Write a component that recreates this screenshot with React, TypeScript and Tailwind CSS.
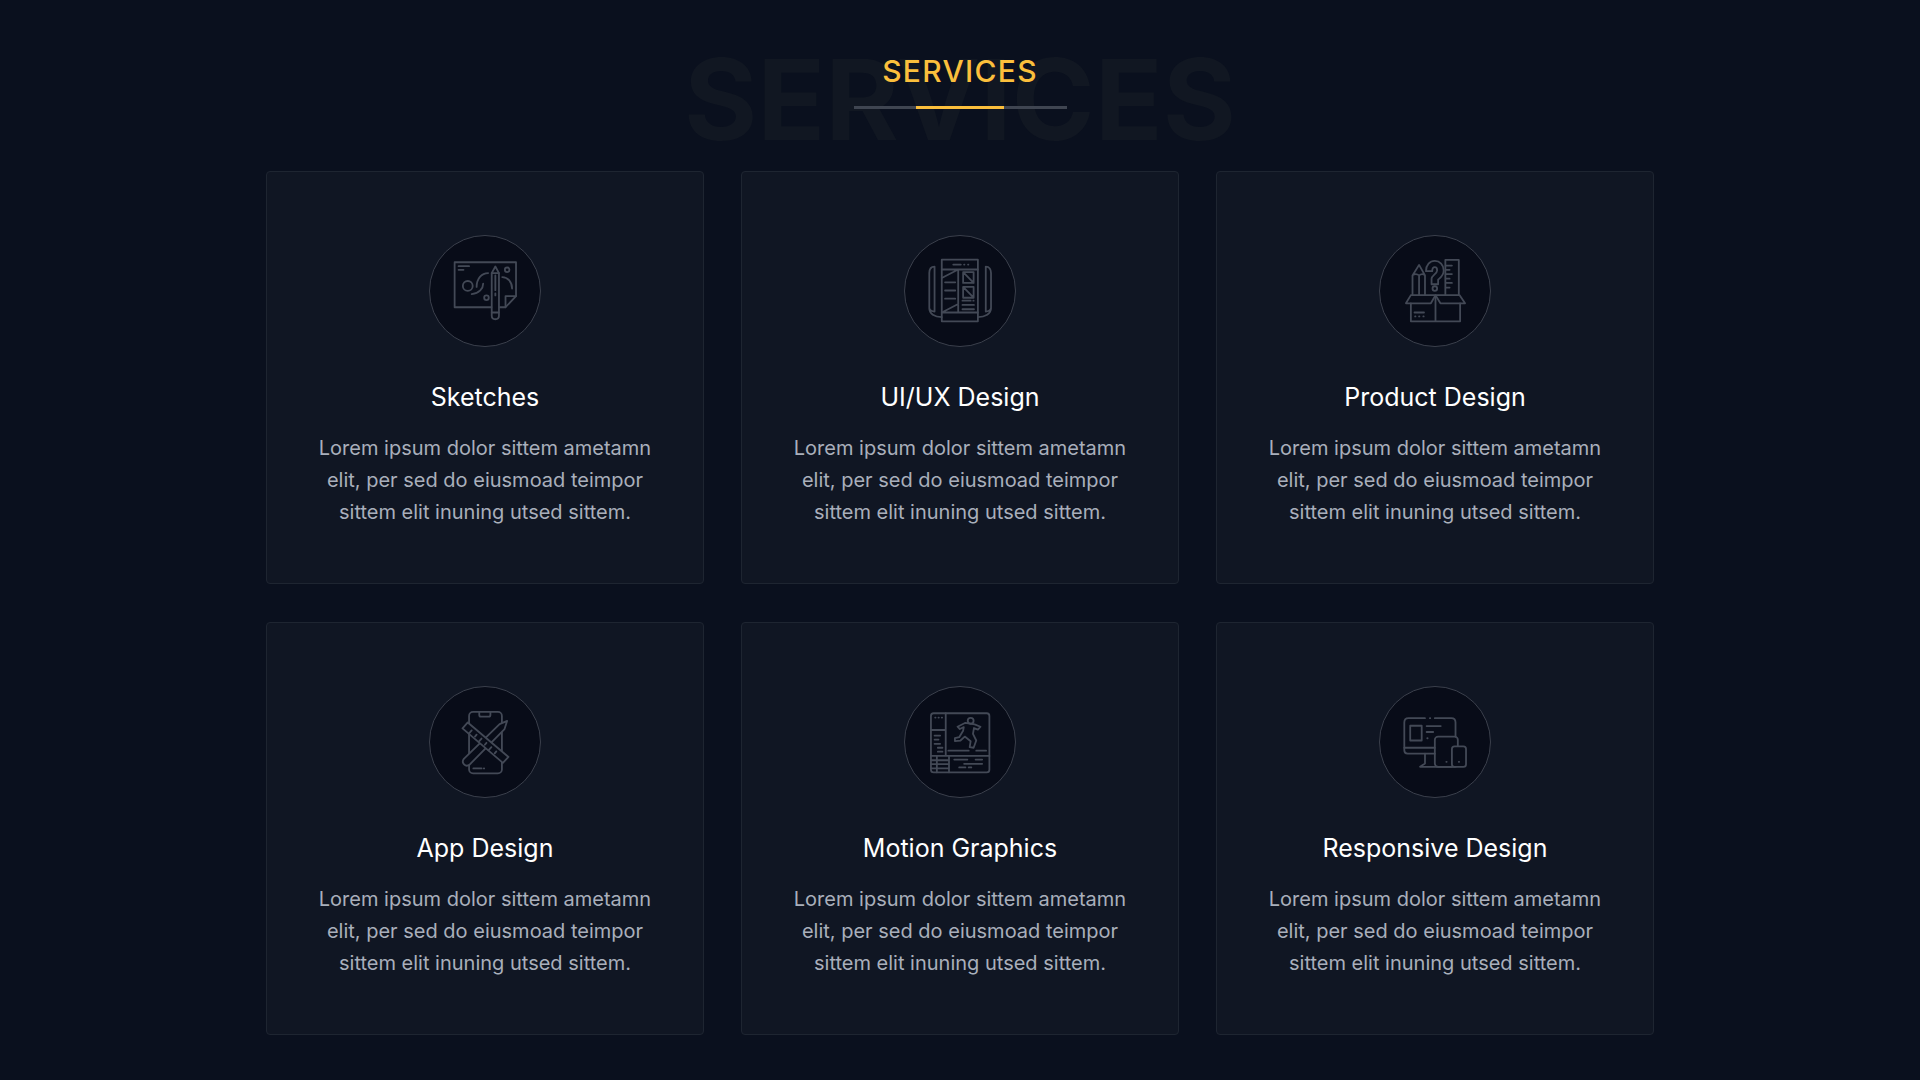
const line = "fill-none stroke-[#434956] [stroke-width:5.5] [stroke-linejoin:round] [stroke-linecap:round]";

const SketchIcon = () => (
  <svg viewBox="28 15 335 335" className={`h-full w-full ${line}`}>
    <path d="M215 232H103V95H290V198L258 232H240" />
    <path d="M258 232V198H290" />
    <path d="M115 107H147M115 118H130" />
    <circle cx="143" cy="167" r="15" />
    <path d="M155 192C178 190 190 175 190 160M170 170C170 145 185 128 205 128" />
    <circle cx="200" cy="203" r="7" />
    <circle cx="263" cy="118" r="7" />
    <path d="M248 140C265 140 278 155 278 175" />
    <path d="M216 128L227 108L238 128V258C238 272 216 272 216 258Z" />
    <path d="M216 128H238M227 135V180M227 190V196M216 248H238" />
  </svg>
);

const UiuxIcon = () => (
  <svg viewBox="28 15 335 335" className={`h-full w-full ${line}`}>
    <rect x="140" y="87" width="110" height="188" />
    <path d="M140 117H250M140 248H250M190 117V248M140 143L190 117M140 248L190 222" />
    <path d="M175 102H198M208 102H209M220 102H221" />
    <path d="M150 156H181M150 181H181M150 206H181" />
    <path d="M205 125H237V158H205ZM205 125L237 158M205 170H237V203H205ZM205 170L237 203" />
    <path d="M203 212H228M236 212H237M203 225H238M203 238H238" />
    <path d="M140 262C118 262 102 252 102 235V128C102 118 106 108 118 108V245M118 245C108 245 104 240 102 235" />
    <path d="M250 262C272 262 290 252 290 235V128C290 118 285 108 274 108V245M274 245C284 245 288 240 290 235" />
  </svg>
);

const ProductIcon = () => (
  <svg viewBox="28 15 335 335" className={`h-full w-full ${line}`}>
    <path d="M127 195V135L147 103L165 135V195M127 135Q137 127 147 135Q157 127 165 135M147 135V195" />
    <path d="M168 122C168 103 180 91 195 91C210 91 222 103 222 120C222 135 212 142 205 148V162H185V145C185 135 202 130 202 120C202 113 200 110 195 110C190 110 187 115 187 122Z" />
    <circle cx="195" cy="175" r="7" />
    <path d="M227 195V88H268V195M227 105H247M227 118H240M227 131H247M227 145H240M227 158H247M227 172H240" />
    <path d="M122 195L107 220H183L197 195L212 220H287L270 195H122" />
    <path d="M122 220V275H272V220M197 195V275" />
    <path d="M133 248H162M135 260H136M147 260H148M160 260H161" />
  </svg>
);

const AppIcon = () => (
  <svg viewBox="28 27 335 335" className={`h-full w-full ${line}`}>
    <rect x="147" y="103" width="100" height="187" rx="12" />
    <path d="M178 104V112Q178 117 183 117H207Q212 117 212 112V104" />
    <path d="M160 275H185M192 275H193" />
    <path className="fill-[#080c18]" d="M263 130L255 155L148 264C136 272 122 258 131 246L240 140Z" />
    <path className="fill-[#080c18]" d="M127 153L143 135L267 240L250 258Z" />
    <path d="M155 159L147 168M170 172L165 178M185 184L176 194M200 197L195 203M215 210L206 220M230 223L225 229" />
  </svg>
);

const MotionIcon = () => (
  <svg viewBox="28 27 335 335" className={`h-full w-full ${line}`}>
    <rect x="107" y="107" width="178" height="180" rx="8" />
    <path d="M152 107V237M107 158H152M107 237H285" />
    <path d="M120 120H121M130 120H131M140 120H141" />
    <path d="M118 175H135M118 187H130M118 200H135M128 212H142M128 224H142" />
    <path d="M162 237V287M125 237V287M107 250H162M107 262H162M107 275H162" />
    <path d="M178 248H218M243 248H263M208 261H263M193 272H212M222 272H230" />
    <path d="M160 221H222M245 221H275" />
    <circle cx="228" cy="130" r="9" />
    <path d="M188 148L212 136L240 141L258 148L250 157L238 152L235 170L245 190L237 212L225 210L228 192L210 178L197 190L180 192L180 183L193 180L205 160L207 149L195 155Z" />
  </svg>
);

const ResponsiveIcon = () => (
  <svg viewBox="28 27 335 335" className={`h-full w-full ${line}`}>
    <path d="M165 122H115C107 122 102 127 102 135V220C102 226 106 230 112 230H195M195 122H245C253 122 258 127 258 135V178" />
    <path d="M180 122H181M102 212H195" />
    <rect x="120" y="145" width="35" height="45" />
    <path d="M170 146H213M170 164H190M172 183H173" />
    <path d="M165 230V260L150 270H247" />
    <rect x="195" y="178" width="70" height="92" rx="10" />
    <rect className="fill-[#080c18]" x="247" y="208" width="43" height="62" rx="8" />
    <path d="M230 255H231M268 255H269" />
  </svg>
);

const SERVICES = [
  { title: "Sketches", Icon: SketchIcon },
  { title: "UI/UX Design", Icon: UiuxIcon },
  { title: "Product Design", Icon: ProductIcon },
  { title: "App Design", Icon: AppIcon },
  { title: "Motion Graphics", Icon: MotionIcon },
  { title: "Responsive Design", Icon: ResponsiveIcon },
];

const App = () => {
  return (
    <section className="flex min-h-[1080px] w-full flex-col items-center bg-[#0a101e] pt-[47px] font-['Inter',sans-serif]">
      <div className="relative flex flex-col items-center">
        <p className="pointer-events-none absolute left-1/2 top-[-8px] -translate-x-1/2 text-[112px] font-bold leading-[120px] text-[#111722]">
          SERVICES
        </p>
        <h2 className="relative text-[30px] font-medium leading-[48px] tracking-[1.3px] text-[#fbbf3c]">
          SERVICES
        </h2>
        <div className="relative mt-[11px] flex h-[3px] w-[213px] justify-center bg-[#3f4551]">
          <span className="h-full w-[88px] bg-[#fbbf3c]" />
        </div>
      </div>
      <div className="mt-[62px] grid w-[1388px] grid-cols-3 gap-x-[37px] gap-y-[38px]">
        {SERVICES.map(({ title, Icon }) => (
          <div
            key={title}
            className="flex h-[413px] flex-col items-center rounded-[4px] border border-[#1e2531] bg-[#101623] pt-[63px] text-center"
          >
            <div className="h-[112px] w-[112px] rounded-full border border-[#3b404c] bg-[#080c18]">
              <Icon />
            </div>
            <h3 className="mt-[32px] text-[25px] font-normal leading-[36px] text-white">
              {title}
            </h3>
            <p className="mt-[17px] w-[360px] text-[20px] leading-[32px] text-[#a9afbb]">
              Lorem ipsum dolor sittem ametamn elit, per sed do eiusmoad teimpor sittem elit inuning utsed sittem.
            </p>
          </div>
        ))}
      </div>
    </section>
  );
};

export default App;
